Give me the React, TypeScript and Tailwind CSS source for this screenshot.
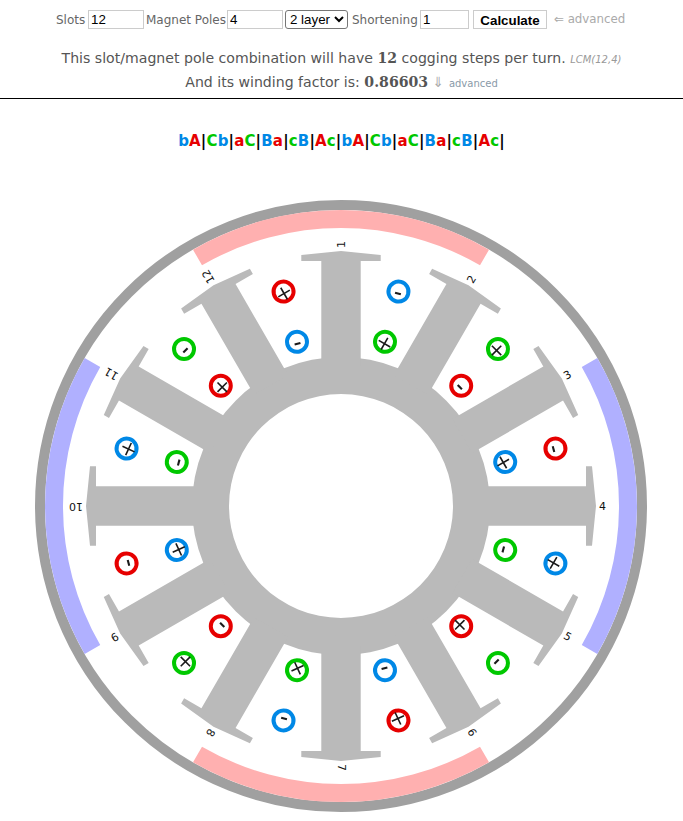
import React from "react";

const RED = "#e60000";
const GREEN = "#00c800";
const BLUE = "#0088e6";

const slots: [string, string, string, string][] = [
  [BLUE, "-", GREEN, "x"],
  [GREEN, "x", RED, "-"],
  [RED, "-", BLUE, "x"],
  [BLUE, "x", GREEN, "-"],
  [GREEN, "-", RED, "x"],
  [RED, "x", BLUE, "-"],
  [BLUE, "-", GREEN, "x"],
  [GREEN, "x", RED, "-"],
  [RED, "-", BLUE, "x"],
  [BLUE, "x", GREEN, "-"],
  [GREEN, "-", RED, "x"],
  [RED, "x", BLUE, "-"],
];

const crossTilt = [-15, 0, 15, -15, 0, 20, 20, 0, 20, -20, 0, 15];

const pt = (r: number, deg: number) => {
  const a = (deg * Math.PI) / 180;
  return `${(r * Math.sin(a)).toFixed(2)} ${(-r * Math.cos(a)).toFixed(2)}`;
};

const arc = (r1: number, r2: number, center: number, half: number) =>
  `M${pt(r1, center - half)} A${r1} ${r1} 0 0 1 ${pt(r1, center + half)} L${pt(r2, center + half)} A${r2} ${r2} 0 0 0 ${pt(r2, center - half)} Z`;

function Conductor({ r, deg, color, kind, tilt }: { r: number; deg: number; color: string; kind: string; tilt: number }) {
  return (
    <g transform={`rotate(${deg}) translate(0 ${-r})`}>
      <circle r="10" fill="#fff" stroke={color} strokeWidth="4" />
      <g transform="translate(0 2)" stroke="#1a1a1a" fill="none">
        {kind === "x" ? (
          <path transform={`rotate(${tilt - deg})`} d="M-4.7 -4.7 L4.7 4.7 M4.7 -4.7 L-4.7 4.7" strokeWidth="1.6" />
        ) : (
          <path d="M-3 0 L3 0" strokeWidth="2.1" />
        )}
      </g>
    </g>
  );
}

function Motor() {
  return (
    <svg viewBox="-320 -320 640 640" className="mt-[35px] ml-[21px] block h-[640px] w-[640px]">
      <circle r="301" fill="none" stroke="#a0a0a0" strokeWidth="10" />
      {[0, 90, 180, 270].map((c) => (
        <path key={c} d={arc(296, 278, c, 30)} fill={c % 180 === 0 ? "#ffb0b0" : "#b0b0ff"} />
      ))}
      <path
        fillRule="evenodd"
        fill="#bababa"
        d="M-149 0 A149 149 0 1 1 149 0 A149 149 0 1 1 -149 0 Z M-112 0 A112 112 0 1 0 112 0 A112 112 0 1 0 -112 0 Z"
      />
      {Array.from({ length: 12 }, (_, i) => (
        <g key={i} transform={`rotate(${i * 30})`}>
          <polygon
            fill="#bababa"
            points="-19.7,-140 -19.7,-245 -39.7,-245 -39.7,-251 0,-255 39.7,-251 39.7,-245 19.7,-245 19.7,-140"
          />
          <text
            transform="translate(0 -258) rotate(-90)"
            fontFamily="'DejaVu Sans', sans-serif"
            fontSize="11"
            fill="#111"
            dominantBaseline="central"
          >
            {i + 1}
          </text>
        </g>
      ))}
      {slots.map((s, i) => (
        <g key={i}>
          <Conductor r={222} deg={15 + i * 30} color={s[0]} kind={s[1]} tilt={crossTilt[i]} />
          <Conductor r={170} deg={15 + i * 30} color={s[2]} kind={s[3]} tilt={crossTilt[i]} />
        </g>
      ))}
    </svg>
  );
}

const colorOf: Record<string, string> = {
  a: "text-[#e60000]",
  A: "text-[#e60000]",
  b: "text-[#0088e6]",
  B: "text-[#0088e6]",
  c: "text-[#00c800]",
  C: "text-[#00c800]",
  "|": "text-black",
};

function Winding() {
  const seq = "bA|Cb|aC|Ba|cB|Ac|bA|Cb|aC|Ba|cB|Ac|".split("");
  return (
    <div className="mt-[32px] h-[20px] text-center text-[15px] leading-[20px] font-bold tracking-[0.15px]">
      {seq.map((c, i) => (
        <span key={i} className={colorOf[c]}>
          {c}
        </span>
      ))}
    </div>
  );
}

export default function App() {
  const inputCls =
    "h-[19px] border border-[#cccccc] bg-white px-[2px] font-['Liberation_Sans',sans-serif] text-[13.33px] text-black outline-none";
  return (
    <div className="h-[821px] w-[683px] overflow-hidden bg-white pt-[10px] font-['DejaVu_Sans',sans-serif] text-[#666666]">
      <div className="flex h-[19px] items-center pl-[56px] text-[12px]">
        <span className="w-[32px]">Slots</span>
        <input className={`${inputCls} w-[56px]`} defaultValue="12" />
        <span className="ml-[2px] w-[81px]">Magnet Poles</span>
        <input className={`${inputCls} w-[56px]`} defaultValue="4" />
        <select className="ml-[2px] h-[19px] w-[63px] rounded-[3px] border border-[#767676] bg-white font-['Liberation_Sans',sans-serif] text-[13.33px] text-black">
          <option>2 layer</option>
        </select>
        <span className="ml-[4px] w-[68px]">Shortening</span>
        <input className={`${inputCls} w-[49px]`} defaultValue="1" />
        <button className="ml-[4px] h-[19px] w-[74px] border border-[#cccccc] bg-white font-['Liberation_Sans',sans-serif] text-[13.33px] font-bold text-black">
          Calculate
        </button>
        <span className="ml-[7px] text-[11.8px] text-[#aaaaaa]">⇐ advanced</span>
      </div>
      <div className="mt-[17px] text-center text-[14.1px] leading-[24px] text-[#555555]">
        <div className="h-[24px]">
          This slot/magnet pole combination will have{" "}
          <b className="font-['DejaVu_Serif',serif]">12</b> cogging steps per turn.{" "}
          <i className="text-[10px] text-[#999999]">LCM(12,4)</i>
        </div>
        <div className="h-[24px]">
          And its winding factor is: <b className="font-['DejaVu_Serif',serif]">0.86603</b>{" "}
          <span className="text-[#aaaaaa]">
            ⇓ <span className="text-[10px] text-[#8a9aa8]">advanced</span>
          </span>
        </div>
      </div>
      <hr className="mt-[4px] border-0 border-t border-black" />
      <Winding />
      <Motor />
    </div>
  );
}
